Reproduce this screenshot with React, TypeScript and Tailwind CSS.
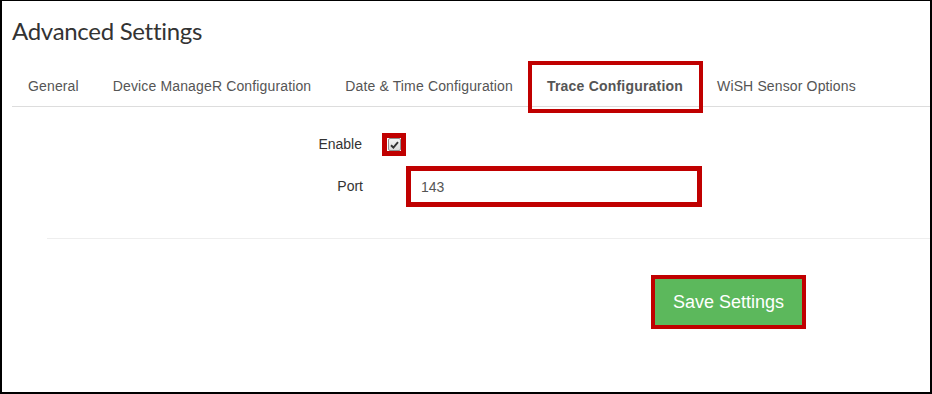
import { useState } from 'react';

const tabs = [
  'General',
  'Device ManageR Configuration',
  'Date & Time Configuration',
  'Trace Configuration',
  'WiSH Sensor Options',
];

export default function App() {
  const [active, setActive] = useState('Trace Configuration');
  const [enabled, setEnabled] = useState(true);
  const [port, setPort] = useState('143');

  return (
    <div className="w-[932px] h-[394px] overflow-hidden bg-white border-l-2 border-t border-r-2 border-b-2 border-black font-['Liberation_Sans',Arial,sans-serif] text-[14px] text-[#333]">
      <h3 className="ml-[10px] mt-[17px] font-['Lato',sans-serif] text-[24px] leading-[26px] tracking-[-0.3px] text-[#333]">
        Advanced Settings
      </h3>

      {/* Tabs */}
      <ul className="ml-[10px] mt-[21px] flex border-b border-[#ddd]">
        {tabs.map((tab) => (
          <li key={tab} className="relative -mb-px mr-[2px]">
            <button
              onClick={() => setActive(tab)}
              className={`block border border-transparent px-[15px] py-[10px] leading-[20px] text-[#555] ${
                active === tab ? 'font-bold tracking-[0.2px]' : 'tracking-[0.14px]'
              }`}
            >
              {tab}
            </button>
            {active === tab && (
              <span className="pointer-events-none absolute -left-[3px] -right-[4px] -top-[4px] -bottom-[6px] border-4 border-[#c00000]" />
            )}
          </li>
        ))}
      </ul>

      {/* Form */}
      <div className="mt-[25px] flex flex-col gap-[10px]">
        <div className="flex items-center">
          <label className="w-[360px] text-right text-[#333]">Enable</label>
          <button
            onClick={() => setEnabled(!enabled)}
            className="ml-[20px] mt-[1px] flex h-[23px] w-[24px] items-center justify-center border-[5px] border-[#c00000] bg-white"
          >
            <span className="flex h-[13px] w-[13px] items-center justify-center rounded-[2px] border border-[#8f8f8f] bg-gradient-to-b from-[#f4f4f4] to-[#dcdcdc]">
              {enabled && (
                <svg width="9" height="8" viewBox="0 0 9 8">
                  <path d="M1 4.2 L3.4 6.5 L8 1.2" fill="none" stroke="#333" strokeWidth="1.9" />
                </svg>
              )}
            </span>
          </button>
        </div>
        <div className="flex items-center">
          <label className="w-[361px] text-right text-[#333]">Port</label>
          <input
            value={port}
            onChange={(e) => setPort(e.target.value)}
            className="ml-[43px] h-[41px] w-[296px] border-[5px] border-[#c00000] bg-white px-[10px] text-[14px] text-[#555] outline-none"
          />
        </div>
      </div>

      <hr className="ml-[45px] mt-[31px] border-t border-[#eee]" />

      <button className="ml-[649px] mt-[36px] h-[54px] w-[155px] border-[4px] border-[#c00000] bg-[#5cb85c] text-[18px] text-white">
        Save Settings
      </button>
    </div>
  );
}
